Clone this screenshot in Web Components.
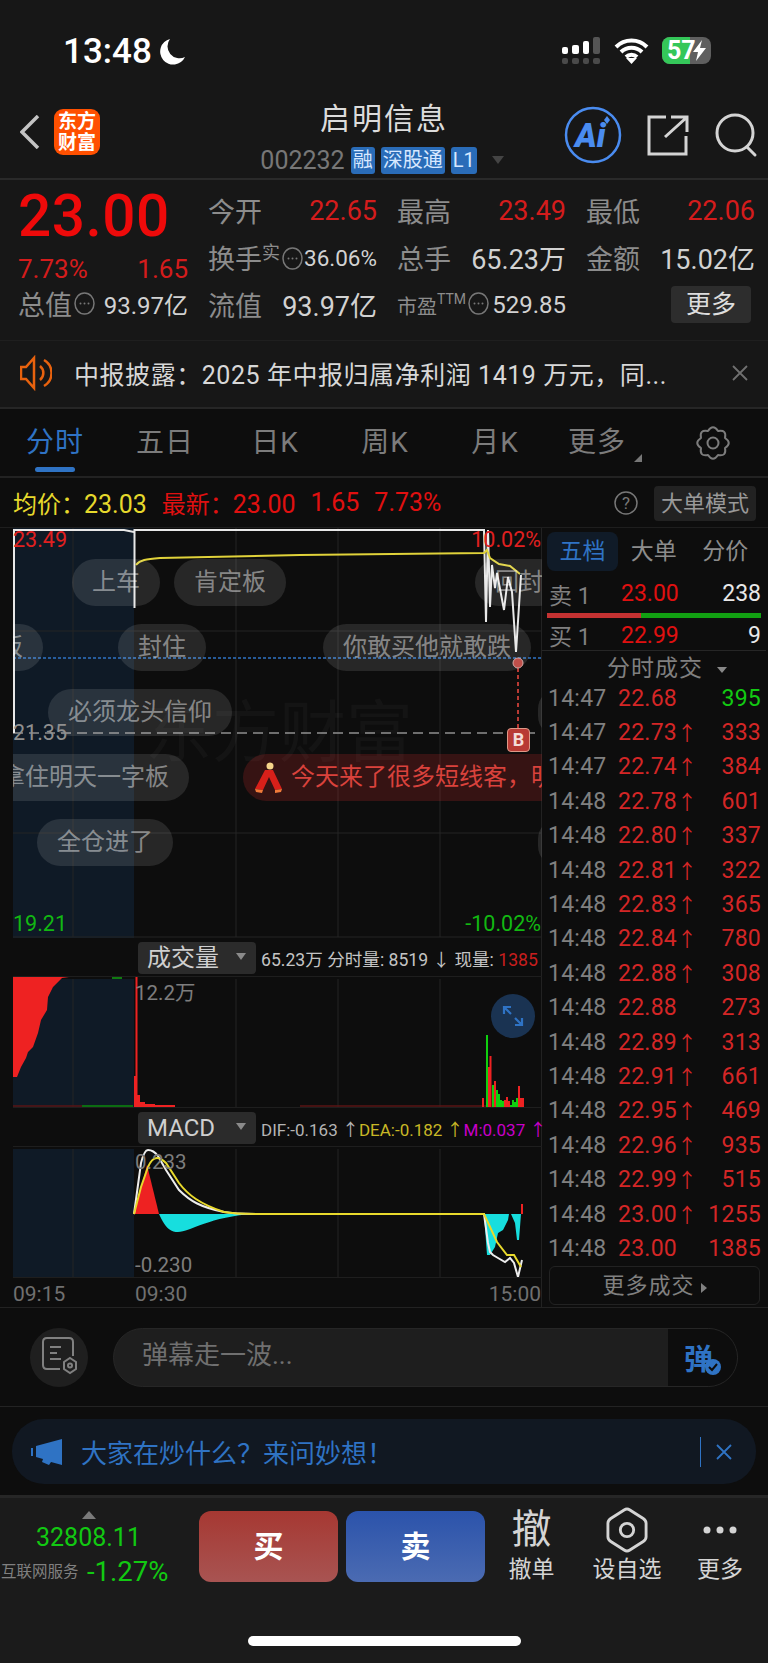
<!DOCTYPE html>
<html lang="zh">
<head>
<meta charset="utf-8">
<title>启明信息</title>
<style>
  html, body { margin: 0; background: #0d0d0d; }
  body { width: 768px; height: 1663px; overflow: hidden; font-family: Roboto, "Noto Sans CJK SC", sans-serif; }
</style>
</head>
<body>
<stock-page></stock-page>
<script>
(function () {
  const base = `
    * { box-sizing: border-box; }
    :host { display: block; font-family: Roboto, "Noto Sans CJK SC", sans-serif; }
  `

  function define(tag, css, html) {
    window.customElements.define(tag, class extends HTMLElement {
      constructor() {
        super()
        let template = document.createElement('template')
        template.innerHTML = `<style>${base}${css}</style>${typeof html === 'function' ? html(this) : html}`
        this.attachShadow({mode: 'open'}).appendChild(template.content.cloneNode(true))
      }
    })
  }

  // ---- top ----
  define('status-bar', `
    :host { height: 90px; background: #171717; position: relative; }
    .row { display: flex; align-items: center; height: 90px; padding: 12px 0 0 63px; color: #fff; }
    .time { font-size: 35px; font-weight: 500; margin-right: 7px; }
    .right { margin-left: auto; margin-right: 56px; display: flex; }
  `, `
    <div class="row">
      <span class="time">13:48</span>
      <svg width="28" height="30" viewBox="0 0 28 30"><path d="M11 3 A13 13 0 1 0 26 21 A12 12 0 0 1 11 3Z" fill="#fff"/></svg>
      <svg class="right" width="152" height="30" viewBox="560 36 152 30">
        <rect x="562" y="47" width="6" height="7" rx="2" fill="#fff"/>
        <rect x="572" y="45" width="7" height="9" rx="2" fill="#fff"/>
        <rect x="583" y="41" width="6" height="13" rx="2" fill="#fff"/>
        <rect x="593" y="37" width="7" height="17" rx="2" fill="#555"/>
        <g fill="#4a4a4a"><rect x="562" y="58" width="6" height="6" rx="2"/><rect x="572" y="58" width="7" height="6" rx="2"/><rect x="583" y="58" width="6" height="6" rx="2"/><rect x="593" y="58" width="7" height="6" rx="2"/></g>
        <path d="M616 47 A22 22 0 0 1 647 47 M621 52 A15 15 0 0 1 642 52 M626 57 A8 8 0 0 1 637 57" fill="none" stroke="#fff" stroke-width="4"/>
        <path d="M626 58 L637 58 L631.500 64Z" fill="#fff"/>
        <rect x="662" y="37" width="49" height="27" rx="8" fill="#5f5f5f"/>
        <path d="M670 37 H690 V64 H670 A8 8 0 0 1 662 56 V45 A8 8 0 0 1 670 37Z" fill="#34c759"/>
        <text x="667" y="59" font-family="Roboto, sans-serif" font-size="25" font-weight="700" fill="#fff">57</text>
        <path d="M713 46 A4 4 0 0 1 713 55Z" fill="#4a4a4a"/>
        <path d="M702 40 L693 52 H698 L696 61 L706 48 H700Z" fill="#fff"/>
      </svg>
    </div>
    <slot></slot>
  `)

  define('stock-header', `
    :host { height: 90px; background: #171717; border-bottom: 2px solid #2a2a2a; display: grid; grid-template-columns: 240px 1fr 240px; }
    .left { display: flex; align-items: center; padding: 0 0 4px 20px; }
    .logo { margin-left: 14px; width: 46px; height: 46px; border-radius: 9px; background: #ff5000; color: #fff; font-weight: 700; font-size: 19px; line-height: 21px; text-align: center; padding-top: 2px; }
    .mid { text-align: center; padding-top: 10px; white-space: nowrap; margin: 0 -20px; }
    .name { font-size: 30px; line-height: 38px; color: #dcdcdc; letter-spacing: 2px; }
    .code { display: flex; justify-content: center; align-items: center; height: 28px; margin-top: 8px; color: #777; font-size: 25px; gap: 6px; padding-right: 4px; }
    .tag { background: #2a6cb8; color: #d7e8ff; font-size: 20px; line-height: 27px; height: 27px; padding: 0 2px; border-radius: 3px; }
    .code i { border: 6px solid transparent; border-top: 8px solid #444; border-bottom: 0; margin-left: 9px; }
    .right { display: flex; align-items: center; justify-content: flex-end; }
  `, `
    <div class="left">
      <svg width="20" height="34" viewBox="0 0 20 34"><path d="M18 1 L2 17 L18 33" fill="none" stroke="#c4c4c4" stroke-width="3.500"/></svg>
      <div class="logo">东方<br>财富</div>
    </div>
    <div class="mid">
      <div class="name">启明信息</div>
      <div class="code"><span>002232</span><span class="tag">融</span><span class="tag">深股通</span><span class="tag">L1</span><i></i></div>
    </div>
    <div class="right">
      <svg width="208" height="70" viewBox="560 100 208 70">
        <circle cx="593" cy="136" r="27" fill="none" stroke="#4a8cf0" stroke-width="2.500"/>
        <text x="575" y="148" font-family="Roboto, sans-serif" font-size="33" font-weight="900" font-style="italic" fill="#4a8cf0">Ai</text>
        <path d="M604 121 l3 -4 l3 4 l-3 4Z" fill="#4a8cf0"/>
        <path d="M666 118 H649 V155 H686 V137 M665 138 L686 119 M671 118 H687 V133" fill="none" stroke="#d4d4d4" stroke-width="3"/>
        <circle cx="735" cy="134" r="18" fill="none" stroke="#d4d4d4" stroke-width="3"/>
        <path d="M747 148 L755 156" stroke="#d4d4d4" stroke-width="3" stroke-linecap="round"/>
      </svg>
    </div>
  `)

  // label on the left, value pushed to the right
  define('quote-cell', `
    :host { display: flex; align-items: center; justify-content: space-between; white-space: nowrap; }
    .l { color: #8c8c8c; font-size: 24.500px; display: flex; align-items: center; }
    ::slotted(*) { font-size: 27px; }
  `, `<span class="l"><slot name="label"></slot></span><slot></slot>`)

  define('dot-mark', `
    :host { display: inline-block; width: 21px; height: 23px; margin-left: 2px; transform: translateY(-5px); vertical-align: middle; }
  `, `<svg width="21" height="23" viewBox="0 0 21 23"><ellipse cx="10.500" cy="11.500" rx="9.500" ry="10.500" fill="none" stroke="#777" stroke-width="1.500"/><circle cx="6.500" cy="11.500" r="1" fill="#777"/><circle cx="10.500" cy="11.500" r="1" fill="#777"/><circle cx="14.500" cy="11.500" r="1" fill="#777"/></svg>`)

  define('quote-panel', `
    :host { height: 160px; background: #171717; display: flex; padding: 11px 13px 0 18px; }
    .price { width: 170px; flex: none; position: relative; }
    .big { font-size: 58.500px; font-weight: 500; color: #ee0a0a; line-height: 50px; letter-spacing: .5px; }
    .chg { display: flex; justify-content: space-between; color: #d41c1c; font-size: 26px; height: 30px; line-height: 30px; margin-top: 13px; }
    .cap { margin-top: 7px; height: 30px; line-height: 30px; }
    .grid { flex: 1; margin: -4px 0 0 20px; display: grid; grid-template-columns: repeat(3, 169px); column-gap: 20px; grid-auto-rows: 47px; align-items: center; }
    .red { color: #d41c1c; }
    .w { color: #d2d2d2; }
    .s22 { font-size: 22.500px !important; }
    .s24 { font-size: 24px !important; }
    sup { font-size: 18px; align-self: flex-start; margin-top: -4px; line-height: 20px; }
    .more { justify-self: end; width: 80px; height: 37px; line-height: 37px; border-radius: 4px; background: #2d2d2d; color: #ddd; font-size: 25px; text-align: center; margin: 0 4px 0 0; }
    quote-cell { height: 47px; }
  `, `
    <div class="price">
      <div class="big">23.00</div>
      <div class="chg"><span>7.73%</span><span>1.65</span></div>
      <quote-cell class="cap"><span slot="label">总值<dot-mark></dot-mark></span><span class="w s24">93.97亿</span></quote-cell>
    </div>
    <div class="grid">
      <quote-cell><span slot="label">今开</span><span class="red">22.65</span></quote-cell>
      <quote-cell><span slot="label">最高</span><span class="red">23.49</span></quote-cell>
      <quote-cell><span slot="label">最低</span><span class="red">22.06</span></quote-cell>
      <quote-cell><span slot="label">换手<sup>实</sup><dot-mark></dot-mark></span><span class="w s22">36.06%</span></quote-cell>
      <quote-cell><span slot="label">总手</span><span class="w">65.23万</span></quote-cell>
      <quote-cell><span slot="label">金额</span><span class="w">15.02亿</span></quote-cell>
      <quote-cell><span slot="label">流值</span><span class="w">93.97亿</span></quote-cell>
      <quote-cell><span slot="label"><span style="font-size:20px">市盈</span><sup style="font-size:14px">TTM</sup><dot-mark></dot-mark></span><span class="w s24">529.85</span></quote-cell>
      <div class="more">更多</div>
    </div>
  `)

  define('notice-bar', `
    :host { height: 69px; background: #171717; border-top: 1px solid #1f1f1f; border-bottom: 2px solid #262626; display: flex; align-items: center; padding: 0 19px 3px 20px; }
    .t { margin-left: 22px; flex: 1; font-size: 25px; color: #d8d8d8; white-space: nowrap; letter-spacing: .55px; }
  `, `
    <svg width="32" height="36" viewBox="0 0 32 36" fill="none" stroke="#e8620e" stroke-width="2.500"><path d="M1 12 H6 L14 3 V33 L6 24 H1Z"/><path d="M20 11 A9 9 0 0 1 20 25 M24 5 A15 15 0 0 1 24 31"/></svg>
    <span class="t">中报披露：2025 年中报归属净利润 1419 万元，同...</span>
    <svg width="18" height="18" viewBox="0 0 18 18"><path d="M2 2 L16 16 M16 2 L2 16" stroke="#707070" stroke-width="1.800"/></svg>
  `)

  define('period-tabs', `
    :host { height: 69px; background: #0d0d0d; border-bottom: 2px solid #222; display: grid; grid-template-columns: repeat(5, 110px) 94px 1fr; padding-bottom: 3px; }
    div { text-align: center; font-size: 28px; color: #7c7c7c; line-height: 68px; position: relative; letter-spacing: 1px; }
    .on { color: #2f73c4; }
    .on::after { content: ''; position: absolute; left: 35px; top: 58px; width: 40px; height: 5px; border-radius: 3px; background: #2f73c4; }
    .m::after { content: ''; position: absolute; left: 84px; top: 45px; border: 4px solid transparent; border-right-color: #777; border-bottom-color: #777; }
    .g { padding-left: 14px; }
    svg { margin-top: 17px; }
  `, () => {
    // scalloped cog outline, lobes meet in sharp notches
    let d = ''
    for (let i = 0; i < 8; i++) {
      let a = i * Math.PI / 4 + Math.PI / 8, b = a + Math.PI / 8, c = a + Math.PI / 4
      let p = (r, t) => (17 + r * Math.cos(t)).toFixed(1) + ' ' + (17 + r * Math.sin(t)).toFixed(1)
      d += (i ? '' : 'M' + p(13, a)) + 'Q' + p(19.5, b) + ' ' + p(13, c)
    }
    return `
      <div class="on">分时</div><div>五日</div><div>日K</div><div>周K</div><div>月K</div><div class="m">更多</div>
      <div class="g"><svg width="34" height="34" viewBox="0 0 34 34" fill="none" stroke="#7c7c7c" stroke-width="2" stroke-linejoin="round"><path d="${d}Z"/><circle cx="17" cy="17" r="5.500"/></svg></div>
    `
  })

  define('info-row', `
    :host { height: 50px; background: #0d0d0d; border-bottom: 1px solid #1e1e1e; display: flex; align-items: center; padding: 0 12px 0 13px; font-size: 25px; white-space: nowrap; }
    .y { color: #e6d92c; }
    .r { color: #e01010; }
    span { margin-right: 15px; }
    span b { font-weight: 400; font-size: 24px; margin-right: -1px; }
    .q { margin-left: auto; margin-right: 16px; display: block; }
    .btn { margin: 2px 0 0; width: 102px; height: 35px; line-height: 35px; border-radius: 4px; background: #222; color: #999; font-size: 22px; text-align: center; }
  `, `
    <span class="y"><b>均价：</b>23.03</span><span class="r"><b>最新：</b>23.00</span><span class="r">1.65</span><span class="r">7.73%</span>
    <svg class="q" width="24" height="24" viewBox="0 0 24 24"><circle cx="12" cy="12" r="11" fill="none" stroke="#777" stroke-width="1.500"/><text x="12" y="18" text-anchor="middle" font-family="Roboto, sans-serif" font-size="17" fill="#777">?</text></svg>
    <div class="btn">大单模式</div>
  `)

  // ---- charts ----
  define('danmu-pill', `
    :host { position: absolute; height: 47px; line-height: 45px; border-radius: 24px; background: rgba(255,255,255,.11); color: rgba(255,255,255,.46); font-size: 24px; padding: 0 20px; white-space: nowrap; display: flex; align-items: center; }
    :host(.hot) { background: rgba(190,40,40,.24); color: #d9423c; padding-left: 10px; }
  `, `<slot></slot>`)

  const grid = (y1, y2) => [73, 236, 338, 440].map(x => `<path d="M${x} ${y1} V${y2}" stroke="#242424"/>`).join('')

  define('main-chart', `
    :host { height: 410px; width: 529px; position: relative; overflow: hidden; }
    svg.c { position: absolute; left: 0; top: 0; }
    .w { position: absolute; left: 132px; top: 155px; font-size: 67px; line-height: 100px; color: rgba(255,255,255,.03); white-space: nowrap; }
    .a { position: absolute; font-size: 21.500px; line-height: 24px; }
    .b { position: absolute; left: 494px; top: 200px; width: 23px; height: 24px; line-height: 22px; border-radius: 4px; background: #b83a34; border: 1px solid #d98; color: #f4dcd8; font-size: 18px; font-weight: 700; text-align: center; }
  `, `
    <svg class="c" width="529" height="410" viewBox="13 528 529 410" fill="none">
      <rect x="13" y="528" width="121" height="410" fill="#0f1a26"/>
      ${grid(528, 937)}
      <path d="M13 631 H541 M13 833 H541 M13 937 H541" stroke="#242424"/>
      <path d="M13 733 H541" stroke="#8f8f8f" stroke-width="1.500" stroke-dasharray="10 6"/>
      <path d="M13 658 H541" stroke="#2f73c4" stroke-width="1.500" stroke-dasharray="3 2"/>
      <path d="M14 733 V530 H124 L134 532 M134.500 608 V530 H484 L486 622 L488 530 L490 607 L492 565 L495 588 L497 573 L504 610 L508 577 L512 592 L516 652 L521 575" stroke="#e8e8e8" stroke-width="2"/>
      <path d="M136 565 C140 560 146 559 160 558 L300 555 L484 553 L487 550 L490 558 L499 564 L510 566 L520 574" stroke="#e0d23a" stroke-width="2"/>
      <path d="M518 668 V728" stroke="#b83a34" stroke-width="2" stroke-dasharray="4 3"/>
      <circle cx="518" cy="663" r="5" fill="#b83a34" stroke="#cfa09c"/>
    </svg>
    <div class="w">东方财富</div>
    <danmu-pill style="left:59px;top:31px;padding-left:20px">上车</danmu-pill>
    <danmu-pill style="left:161px;top:31px">肯定板</danmu-pill>
    <danmu-pill style="left:462px;top:31px">回封</danmu-pill>
    <danmu-pill style="left:-58px;top:96px">封板</danmu-pill>
    <danmu-pill style="left:105px;top:96px">封住</danmu-pill>
    <danmu-pill style="left:310px;top:96px">你敢买他就敢跌</danmu-pill>
    <danmu-pill style="left:35px;top:161px">必须龙头信仰</danmu-pill>
    <danmu-pill style="left:-32px;top:226px">拿住明天一字板</danmu-pill>
    <danmu-pill class="hot" style="left:230px;top:226px">
      <svg width="30" height="32" viewBox="0 0 30 32" style="flex:none;margin-right:8px"><circle cx="17" cy="4" r="3.500" fill="#f4d58a"/><path d="M12 8 L20 8 L29 27 L22 28 L16 15 L10 28 L2 27Z" fill="#d8201a"/><path d="M2 27 L10 28 L9 31 L3 30Z M22 28 L29 27 L28 30 L22 31Z" fill="#f07a3a"/></svg>今天来了很多短线客，明
    </danmu-pill>
    <danmu-pill style="left:24px;top:291px">全仓进了</danmu-pill>
    <danmu-pill style="left:525px;top:161px;width:40px"></danmu-pill>
    <danmu-pill style="left:525px;top:291px;width:40px"></danmu-pill>
    <span class="a" style="left:0;top:0;color:#e02020">23.49</span>
    <span class="a" style="right:1px;top:0;color:#e02020">10.02%</span>
    <span class="a" style="left:0;top:193px;color:#8f8f8f">21.35</span>
    <span class="a" style="left:0;top:384px;color:#12b812">19.21</span>
    <span class="a" style="right:1px;top:384px;color:#12b812">-10.02%</span>
    <span class="b">B</span>
  `)

  define('sub-header', `
    :host { height: 39px; width: 529px; display: flex; align-items: center; padding: 2px 0 0 125px; border-bottom: 1px solid #1e1e1e; white-space: nowrap; }
    .btn { width: 118px; height: 32px; line-height: 32px; background: #2b2b2b; border-radius: 4px; color: #cfcfcf; font-size: 24px; padding-left: 9px; position: relative; margin-right: 5px; flex: none; }
    .btn::after { content: ''; position: absolute; left: 98px; top: 11px; border: 5px solid transparent; border-top: 7px solid #8a8a8a; border-bottom: 0; }
    .i { font-size: 17px; color: #b4b4b4; display: flex; width: 276px; justify-content: space-between; }
  `, el => `<div class="btn">${el.getAttribute('label')}</div><div class="i"><slot></slot></div>`)

  const volBars = [[482, 9], [486, 72], [488, 40], [489.500, 51], [492, 22], [494, 26], [496, 17], [498, 13], [500, 7], [502, 6], [504, 7], [506, 10], [508, 6], [510, 2], [512, 7], [514, 5], [516, 9], [518, 21], [520, 9], [522, 9]]
  const greens = [486, 492, 496, 498, 500, 502, 510, 512, 514, 516]

  define('vol-chart', `
    :host { height: 131px; width: 529px; position: relative; overflow: hidden; border-bottom: 1px solid #1e1e1e; }
    svg.c { position: absolute; left: 0; top: 0; }
    .a { position: absolute; left: 122px; top: 4px; font-size: 20.500px; line-height: 24px; color: #7d7d7d; }
    .e { position: absolute; left: 478px; top: 17px; width: 44px; height: 44px; border-radius: 50%; background: #1a3352; }
  `, `
    <svg class="c" width="529" height="131" viewBox="13 977 529 131" fill="none">
      <rect x="13" y="979" width="121" height="128" fill="#0f1a26"/>
      ${grid(979, 1107)}
      <path d="M13 977 H69 L62 978 L53 987 L48 997 L47 1010 L41 1020 L38 1033 L33 1047 L28 1052 L26 1058 L21 1067 L17 1077 H13Z" fill="#ee2222"/>
      <path d="M112 978 H122" stroke="#12a012" stroke-width="1.500"/>
      <path d="M13 1106 H82 M300 1106 H490" stroke="#5a1414" stroke-width="1.500"/>
      <path d="M82 1106 H133" stroke="#0d8a0d" stroke-width="1.500"/>
      <path d="M136.500 977 V1107" stroke="#ee2222" stroke-width="2"/>
      <path d="M134 1076 h3 V1107 h-3Z M137 1095 h3 V1107 h-3Z M140 1102 h5 V1107 h-5Z M145 1104 h10 V1107 h-10Z M155 1105 h20 V1107 h-20Z" fill="#ee2222"/>
      ${volBars.map(b => `<rect x="${b[0]}" y="${1107 - b[1]}" width="2" height="${b[1]}" fill="${greens.includes(b[0]) ? '#0fd00f' : '#ee2222'}"/>`).join('')}
    </svg>
    <span class="a">12.2万</span>
    <div class="e"><svg width="44" height="44" viewBox="0 0 44 44" fill="none" stroke="#2f73c4" stroke-width="2.200"><path d="M13 20 V13 H20 M13 13 L20 20 M31 24 V31 H24 M31 31 L24 24"/></svg></div>
  `)

  define('macd-chart', `
    :host { height: 131px; width: 529px; position: relative; overflow: hidden; border-bottom: 1px solid #1e1e1e; }
    svg { position: absolute; left: 0; top: 0; }
    .a { position: absolute; left: 122px; font-size: 20.500px; line-height: 24px; color: #7d7d7d; }
  `, `
    <svg width="529" height="131" viewBox="13 1147 529 131" fill="none">
      <rect x="13" y="1149" width="121" height="129" fill="#0f1a26"/>
      ${grid(1149, 1278)}
      <path d="M134 1214 L147 1165 L159 1214Z" fill="#ee2222"/>
      <path d="M159 1214 C166 1230 172 1232 178 1232 C190 1232 210 1216 255 1214Z" fill="#17dede"/>
      <path d="M484 1214 L487 1255 L490 1255 L495 1247 L498 1233 L503 1230 L508 1220 L509 1214Z M511 1214 L515 1223 L517 1240 L519 1240 L521 1214Z" fill="#17dede"/>
      <rect x="521" y="1204" width="2" height="10" fill="#ee2222"/>
      <path d="M134 1214 L141 1163 C143 1155 145 1150 148 1150 C152 1150 155 1152 158 1156 L166 1170 L179 1190 C190 1201 200 1207 224 1212 C235 1214 245 1214 259 1214 H484 L488 1243 L490 1252 L493 1255 L498 1258 L505 1262 L510 1258 L514 1263 L518 1277 L522 1260" stroke="#ededed" stroke-width="2"/>
      <path d="M134 1214 L141 1187 L148 1167 C151 1160 154 1158 157 1158 C160 1158 163 1160 166 1163 L179 1183 C188 1195 200 1204 224 1212 C235 1214 245 1214 259 1214 H484 L497 1242 L507 1255 L514 1255 L521 1267" stroke="#e8d92c" stroke-width="2"/>
    </svg>
    <span class="a" style="top:3px">0.233</span>
    <span class="a" style="top:106px">-0.230</span>
  `)

  define('time-axis', `
    :host { height: 29px; width: 529px; display: flex; justify-content: space-between; color: #707070; font-size: 21px; line-height: 33px; padding-right: 1px; position: relative; }
    .m { position: absolute; left: 122px; }
  `, `<span>09:15</span><span class="m">09:30</span><span>15:00</span>`)

  define('chart-column', `
    :host { width: 542px; flex: none; padding-left: 13px; border-right: 1px solid #222; }
  `, `
    <main-chart></main-chart>
    <sub-header label="成交量"><span style="font-size:17.600px;color:#c4c4c4">65.23万 分时量: 8519 ↓ 现量: <span style="color:#c81e1e">1385</span></span></sub-header>
    <vol-chart></vol-chart>
    <sub-header label="MACD"><span>DIF:-0.163 ↑</span><span style="color:#c9b826">DEA:-0.182 ↑</span><span style="color:#c800c8">M:0.037 ↑</span></sub-header>
    <macd-chart></macd-chart>
    <time-axis></time-axis>
  `)

  // ---- right column ----
  define('trade-row', `
    :host { display: grid; grid-template-columns: 58px 71px 15px 1fr; align-items: center; height: 34.400px; font-size: 23px; letter-spacing: .25px; color: #d42626; white-space: nowrap; }
    .t { color: #808080; }
    .p { text-align: right; }
    .a { font-size: 20px; }
    .v { text-align: right; }
  `, el => `
    <span class="t">${el.getAttribute('time')}</span>
    <span class="p">${el.getAttribute('price')}</span>
    <span class="a">${el.hasAttribute('up') ? '↑' : ''}</span>
    <span class="v"${el.hasAttribute('green') ? ' style="color:#12c912"' : ''}>${el.getAttribute('vol')}</span>
  `)

  const trades = [
    ['14:47', '22.68', 0, 395], ['14:47', '22.73', 1, 333], ['14:47', '22.74', 1, 384],
    ['14:48', '22.78', 1, 601], ['14:48', '22.80', 1, 337], ['14:48', '22.81', 1, 322],
    ['14:48', '22.83', 1, 365], ['14:48', '22.84', 1, 780], ['14:48', '22.88', 1, 308],
    ['14:48', '22.88', 0, 273], ['14:48', '22.89', 1, 313], ['14:48', '22.91', 1, 661],
    ['14:48', '22.95', 1, 469], ['14:48', '22.96', 1, 935], ['14:48', '22.99', 1, 515],
    ['14:48', '23.00', 1, 1255], ['14:48', '23.00', 0, 1385]
  ]

  define('order-book', `
    :host { flex: 1; min-width: 0; padding: 4px 7px 0 5px; }
    .tabs { display: grid; grid-template-columns: 71px 1fr 1fr; height: 39px; line-height: 39px; font-size: 23px; color: #8c8c8c; text-align: center; }
    .tabs .on { background: #101b28; border-radius: 8px; color: #2f73c4; }
    .lv { display: grid; grid-template-columns: 72px 60px 1fr; align-items: center; height: 37px; padding-left: 2px; font-size: 23px; color: #e01010; }
    .lv span:first-child { color: #808080; }
    .lv span:last-child { color: #e8e8e8; text-align: right; }
    .bar { height: 5px; background: #12a012; position: relative; margin: 1px 0 0; }
    .bar::before { content: ''; position: absolute; left: 0; top: 0; bottom: 0; width: 94px; background: #c43232; }
    .head { margin: 0 -5px; border-top: 1px solid #262626; height: 31px; line-height: 36px; text-align: center; font-size: 23px; color: #808080; position: relative; padding-left: 2px; letter-spacing: 1px; }
    .head::after { content: ''; position: absolute; left: 175px; top: 16px; border: 5px solid transparent; border-top: 6px solid #888; border-bottom: 0; }
    .list { padding-left: 1px; }
    .more { margin: 0 1px 0 2px; height: 39px; line-height: 37px; border: 1px solid #222; border-radius: 6px; text-align: center; font-size: 22px; color: #808080; letter-spacing: 1px; }
    .more::after { content: ''; display: inline-block; margin-left: 6px; border: 5px solid transparent; border-left: 6px solid #808080; border-right: 0; }
  `, `
    <div class="tabs"><span class="on">五档</span><span>大单</span><span>分价</span></div>
    <div class="lv" style="margin-top:4px"><span>卖 1</span><span>23.00</span><span>238</span></div>
    <div class="bar"></div>
    <div class="lv" style="height:32px"><span>买 1</span><span>22.99</span><span>9</span></div>
    <div class="head">分时成交</div>
    <div class="list">${trades.map(t => `<trade-row time="${t[0]}" price="${t[1]}" vol="${t[3]}"${t[2] ? ' up' : ''}${t[3] === 395 ? ' green' : ''}></trade-row>`).join('')}</div>
    <div class="more">更多成交</div>
  `)

  define('chart-area', `
    :host { height: 780px; background: #0d0d0d; display: flex; border-bottom: 1px solid #222; }
  `, `<chart-column></chart-column><order-book></order-book>`)

  // ---- bottom ----
  define('comment-bar', `
    :host { height: 99px; background: #0d0d0d; border-bottom: 1px solid #232323; display: flex; align-items: center; padding: 0 30px; }
    .ic { width: 58px; height: 59px; border-radius: 50%; background: #1f1f1f; display: flex; align-items: center; justify-content: center; flex: none; }
    .in { margin-left: 25px; flex: 1; height: 59px; border-radius: 30px; background: #1e1e1e; border: 1px solid #262626; display: flex; overflow: hidden; }
    .tx { flex: 1; padding-left: 28px; line-height: 52px; font-size: 26px; color: #707070; }
    .send { width: 69px; background: #0d0d0d; display: flex; align-items: center; justify-content: center; position: relative; color: #2f73c4; font-size: 29px; font-weight: 700; padding-right: 8px; }
    .send svg { position: absolute; left: 37px; top: 30px; }
  `, `
    <div class="ic"><svg width="36" height="42" viewBox="0 0 36 42" fill="none" stroke="#808080" stroke-width="2"><path d="M19 33 H6 Q2 33 2 29 V6 Q2 2 6 2 H28 Q32 2 32 6 V20"/><path d="M9 11 H20 M9 17 H16 M9 23 H20"/><path d="M29 22 L35 26 V33 L29 37 L23 33 V26Z"/><circle cx="29" cy="29.500" r="2"/></svg></div>
    <div class="in">
      <span class="tx">弹幕走一波...</span>
      <div class="send">弹<svg width="16" height="16" viewBox="0 0 16 16"><circle cx="8" cy="8" r="8" fill="#2f73c4"/><path d="M4 8 L7 11 L12 5" fill="none" stroke="#0d0d0d" stroke-width="2"/></svg></div>
    </div>
  `)

  define('ai-banner', `
    :host { height: 89px; background: #0d0d0d; padding: 12px 12px 0; border-bottom: 1px solid #262626; }
    .b { height: 65px; border-radius: 32px; background: #111822; display: flex; align-items: center; padding: 0 24px 0 19px; color: #2f73c4; font-size: 26px; }
    .t { margin-left: 19px; flex: 1; }
    .d { width: 1px; height: 30px; background: #2f73c4; margin-right: 15px; }
  `, `
    <div class="b">
      <svg width="31" height="26" viewBox="0 0 31 26" fill="#2f73c4"><rect x="0" y="9" width="2" height="8"/><path d="M5 7 L31 0 V26 L20 23 L18 26 L11 23 L12 20 L5 18Z"/></svg>
      <span class="t">大家在炒什么？来问妙想！</span>
      <span class="d"></span>
      <svg width="16" height="16" viewBox="0 0 16 16"><path d="M1 1 L15 15 M15 1 L1 15" stroke="#2f73c4" stroke-width="1.800"/></svg>
    </div>
  `)

  define('tool-cell', `
    :host { display: flex; flex-direction: column; align-items: center; color: #d4d4d4; font-size: 23px; white-space: nowrap; }
    .i { height: 50px; display: flex; align-items: center; justify-content: center; margin-bottom: -1px; }
    .t { line-height: 32px; }
  `, `<div class="i"><slot name="icon"></slot></div><div class="t"><slot></slot></div>`)

  define('trade-bar', `
    :host { height: 167px; background: #1b1b1b; border-top: 2px solid #262626; position: relative; display: flex; padding-top: 13px; }
    .idx { width: 199px; flex: none; position: relative; text-align: center; padding-right: 22px; white-space: nowrap; }
    .idx i { display: block; width: 0; margin: 0 auto; border: 7px solid transparent; border-bottom: 8px solid #7a7a7a; border-top: 0; }
    .idx b { display: block; font-weight: 400; color: #12c912; font-size: 25px; line-height: 28px; margin-top: 5px; }
    .sub { display: flex; align-items: center; margin-top: 3px; padding-left: 1px; }
    .sub span { color: #808080; font-size: 15.500px; line-height: 34px; width: 86px; text-align: left; }
    .sub em { font-style: normal; color: #12c912; font-size: 27.500px; line-height: 34px; }
    .act { width: 139px; height: 71px; border-radius: 12px; color: #fff; font-size: 30px; font-weight: 700; line-height: 71px; text-align: center; flex: none; }
    .buy { background: linear-gradient(#a63832, #a85452); margin-right: 8px; }
    .sell { background: linear-gradient(#2b53ab, #4b6bb2); }
    .tools { flex: 1; display: grid; grid-template-columns: 93px 98px 88px; margin-top: -6px; }
    .home { position: absolute; left: 248px; top: 138px; width: 273px; height: 10px; border-radius: 5px; background: #fff; }
  `, `
    <div class="idx">
      <i></i><b>32808.11</b>
      <div class="sub"><span>互联网服务</span><em>-1.27%</em></div>
    </div>
    <div class="act buy">买</div>
    <div class="act sell">卖</div>
    <div class="tools">
      <tool-cell><span slot="icon" style="font-size:40px;line-height:50px">撤</span>撤单</tool-cell>
      <tool-cell><svg slot="icon" width="42" height="48" viewBox="0 0 44 48" fill="none" stroke="#d4d4d4" stroke-width="3"><path d="M19 3 Q22 1 25 3 L39 12 Q42 14 42 17 V31 Q42 34 39 36 L25 45 Q22 47 19 45 L5 36 Q2 34 2 31 V17 Q2 14 5 12Z"/><circle cx="22" cy="24" r="7"/></svg>设自选</tool-cell>
      <tool-cell><svg slot="icon" width="36" height="10" viewBox="0 0 36 10" fill="#d4d4d4"><circle cx="5" cy="5" r="3.500"/><circle cx="18" cy="5" r="3.500"/><circle cx="31" cy="5" r="3.500"/></svg>更多</tool-cell>
    </div>
    <div class="home"></div>
  `)

  define('stock-page', `
    :host { width: 768px; height: 1663px; overflow: hidden; }
  `, `
    <status-bar></status-bar>
    <stock-header></stock-header>
    <quote-panel></quote-panel>
    <notice-bar></notice-bar>
    <period-tabs></period-tabs>
    <info-row></info-row>
    <chart-area></chart-area>
    <comment-bar></comment-bar>
    <ai-banner></ai-banner>
    <trade-bar></trade-bar>
  `)
})()
</script>
</body>
</html>
